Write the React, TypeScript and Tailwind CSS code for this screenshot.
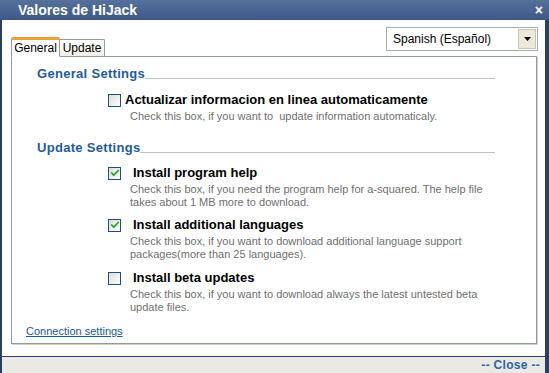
import { Check } from 'lucide-react';

function CheckBox({ checked }: { checked?: boolean }) {
  return (
    <div className="w-[13px] h-[13px] shrink-0 border border-[#1c5180] bg-gradient-to-br from-[#dcdcd7] to-white flex items-center justify-center">
      {checked && <Check className="w-[10px] h-[10px] text-[#21a121]" strokeWidth={4} />}
    </div>
  );
}

function Heading({ title }: { title: string }) {
  return (
    <div className="flex items-end h-[16px] pl-[25px] pr-[41px]">
      <span className="text-[13px] leading-[16px] font-bold text-[#1f5aa0] tracking-[0.3px]">{title}</span>
      <div className="flex-1 border-b border-[#c0c0c0] mb-[3px]" />
    </div>
  );
}

function Option({
  label,
  checked,
  lines,
  gap,
}: {
  label: string;
  checked?: boolean;
  lines: string[];
  gap: string;
}) {
  return (
    <div className="flex flex-col pl-[96px]">
      <div className={`flex items-center h-[16px] ${gap}`}>
        <CheckBox checked={checked} />
        <span className="text-[13px] leading-[16px] font-bold text-black whitespace-nowrap">{label}</span>
      </div>
      <div className="pl-[22px] mt-[2px] text-[11px] leading-[13px] text-[#6f6f6f] whitespace-pre">
        {lines.map((l) => (
          <div key={l}>{l}</div>
        ))}
      </div>
    </div>
  );
}

export default function App() {
  return (
    <div
      className="w-[549px] h-[373px] flex flex-col bg-[#2c3f60] pl-[2px] pr-[4px] overflow-hidden"
      style={{ fontFamily: '"Liberation Sans", Arial, sans-serif' }}
    >
      {/* Title bar */}
      <div className="h-[20px] shrink-0 flex items-center justify-between bg-gradient-to-b from-[#56719c] to-[#3d5884] pl-[18px] pr-[6px] -ml-[2px] -mr-[4px]">
        <span className="text-white font-bold text-[14px] leading-none">Valores de HiJack</span>
        <span className="text-white font-bold text-[14px] leading-none">×</span>
      </div>

      {/* Body */}
      <div className="flex-1 flex flex-col bg-white">
        <div className="h-[36px] flex items-start justify-between">
          <div className="self-end flex items-end ml-[9px]">
            <div className="relative z-10 -mb-px w-[49px] h-[20px] bg-white border border-[#919b9c] border-b-white border-t-[3px] border-t-[#e8a23a] rounded-t-[2px] text-[12px] text-black flex items-center justify-center">
              General
            </div>
            <div className="w-[45px] h-[17px] bg-gradient-to-b from-white to-[#f1efe6] border border-l-0 border-[#919b9c] border-b-0 rounded-tr-[2px] text-[12px] text-black flex items-center justify-center">
              Update
            </div>
          </div>
          <div className="mt-[7px] mr-[7px] w-[152px] h-[24px] border border-[#a5acb2] flex items-center justify-between pl-[6px] pr-[1px]">
            <span className="text-[12px] text-black">Spanish (Español)</span>
            <div className="w-[18px] h-[20px] bg-[#ece9d8] border border-[#c9c4b4] flex items-center justify-center">
              <svg width="7" height="4" viewBox="0 0 7 4">
                <path d="M0 0H7L3.5 4Z" fill="#000" />
              </svg>
            </div>
          </div>
        </div>

        {/* Panel */}
        <div className="ml-[9px] mr-[8px] h-[288px] border border-[#919b9c] shadow-[1px_1px_0_#d4d0c8] flex flex-col pt-[9px]">
          <Heading title="General Settings" />
          <div className="mt-[10px]">
            <Option
              label="Actualizar informacion en linea automaticamente"
              lines={['Check this box, if you want to  update information automaticaly.']}
              gap="gap-[4px]"
            />
          </div>
          <div className="mt-[17px]">
            <Heading title="Update Settings" />
          </div>
          <div className="mt-[9px] flex flex-col gap-[8px]">
            <Option
              label="Install program help"
              checked
              lines={[
                'Check this box, if you need the program help for a-squared. The help file',
                'takes about 1 MB more to download.',
              ]}
              gap="gap-[12px]"
            />
            <Option
              label="Install additional languages"
              checked
              lines={[
                'Check this box, if you want to download additional language support',
                'packages(more than 25 languages).',
              ]}
              gap="gap-[12px]"
            />
            <div className="mt-[1px]">
              <Option
                label="Install beta updates"
                lines={[
                  'Check this box, if you want to download always the latest untested beta',
                  'update files.',
                ]}
                gap="gap-[12px]"
              />
            </div>
          </div>
          <div className="mt-[4px] pl-[14px]">
            <a className="text-[11px] leading-[13px] text-[#1b5a90] underline">Connection settings</a>
          </div>
        </div>
        <div className="flex-1" />

        {/* Footer */}
        <div className="h-[17px] border-t border-[#2c3f60] bg-[#ebe9e3] flex items-center justify-end pr-[5px]">
          <span className="text-[12px] font-bold text-[#2a64a8] leading-none tracking-[0.3px]">-- Close --</span>
        </div>
      </div>
    </div>
  );
}
